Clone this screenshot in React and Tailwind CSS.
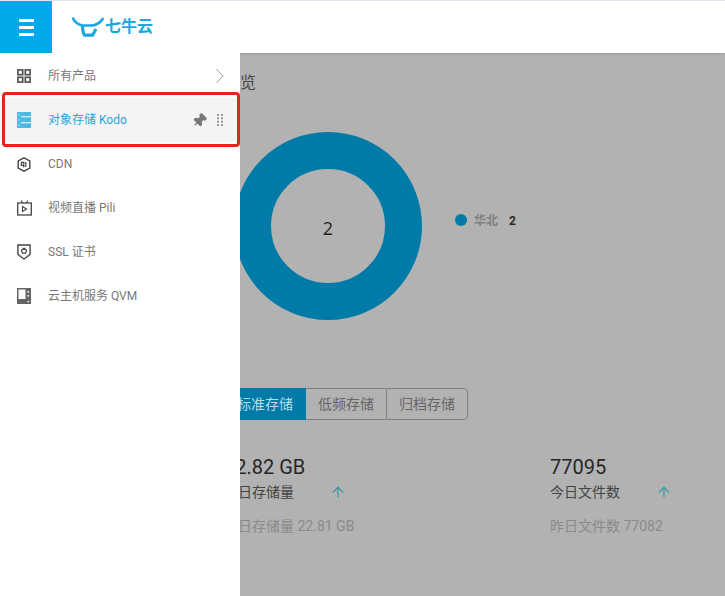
import { ChevronRight, Pin, ArrowUp } from "lucide-react";

const font = "font-['Roboto','Noto_Sans_CJK_SC',sans-serif]";

function GridIcon() {
  return (
    <svg width="14" height="14" viewBox="0 0 14 14" fill="none" stroke="#555" strokeWidth="1.7">
      <rect x="0.9" y="0.9" width="4.8" height="4.8" />
      <rect x="8.3" y="0.9" width="4.8" height="4.8" />
      <rect x="0.9" y="8.3" width="4.8" height="4.8" />
      <rect x="8.3" y="8.3" width="4.8" height="4.8" />
    </svg>
  );
}

function KodoIcon() {
  return (
    <svg width="14" height="16" viewBox="0 0 14 16">
      <rect width="14" height="16" fill="#4db9e2" />
      <path d="M4 4.8h10M4 10.8h10" stroke="#fff" strokeWidth="1.1" />
      <path d="M1.5 3h1.5M1.5 8h1.5M1.5 13h1.5" stroke="#d5f0fa" strokeWidth="1.2" />
    </svg>
  );
}

function CdnIcon() {
  return (
    <svg width="14" height="15" viewBox="0 0 14 15" fill="none" stroke="#444">
      <path d="M7 0.8l5.8 3.2v7L7 14.2 1.2 11V4z" strokeWidth="1.4" />
      <path d="M4.4 5.4h2.4v3H4.4zM6.8 8.4v2M8.8 5v5" strokeWidth="1.2" />
    </svg>
  );
}

function TvIcon() {
  return (
    <svg width="15" height="16" viewBox="0 0 15 16" fill="none" stroke="#444">
      <path d="M4 0.5l2 2.5M11 0.5L9 3" strokeWidth="1.1" />
      <rect x="0.7" y="3" width="13.6" height="12" strokeWidth="1.3" />
      <path d="M5.5 6.5l4 2.5-4 2.5z" strokeWidth="1.1" />
    </svg>
  );
}

function ShieldIcon() {
  return (
    <svg width="14" height="16" viewBox="0 0 14 16" fill="none" stroke="#444">
      <path d="M0.9 1h12.2v9.5L7 15 0.9 10.5z" strokeWidth="1.4" />
      <path d="M7 4.2l2.6 2-1 3H5.4l-1-3z" strokeWidth="1.2" />
    </svg>
  );
}

function QvmIcon() {
  return (
    <svg width="14" height="16" viewBox="0 0 14 16">
      <path d="M0 0h14v16H0zM1.5 1.5v9.5h7V1.5z" fill="#666" fillRule="evenodd" />
      <rect x="10.5" y="3" width="1.6" height="1.6" fill="#fff" />
      <rect x="10.5" y="7" width="1.6" height="1.6" fill="#fff" />
      <rect x="10.5" y="13" width="1.6" height="1.2" fill="#fff" />
    </svg>
  );
}

function GripIcon() {
  return (
    <svg width="6" height="12" viewBox="0 0 6 12" fill="#999">
      <rect x="0" y="0" width="2" height="2" />
      <rect x="4" y="0" width="2" height="2" />
      <rect x="0" y="3.3" width="2" height="2" />
      <rect x="4" y="3.3" width="2" height="2" />
      <rect x="0" y="6.7" width="2" height="2" />
      <rect x="4" y="6.7" width="2" height="2" />
      <rect x="0" y="10" width="2" height="2" />
      <rect x="4" y="10" width="2" height="2" />
    </svg>
  );
}

function Logo() {
  return (
    <svg width="32" height="20" viewBox="0 0 32 20" fill="none" stroke="#1ba8e0">
      <path d="M0.6 0.6C2.5 5 6 8 11 8.5h8c5 0 9.500-3 12.400-7.500" strokeWidth="2.600" />
      <path d="M10.500 8c0 5 .5 8 2 10.200h8L24 12" strokeWidth="3.200" />
    </svg>
  );
}

function MenuItem({ icon, label }) {
  return (
    <div className="flex h-11 items-center pl-[17px]">
      <div className="flex w-[31px] shrink-0">{icon}</div>
      <span className="text-xs text-[#777]">{label}</span>
    </div>
  );
}

function Stat({ value, label, prev, className }) {
  return (
    <div className={className}>
      <div className="text-[20px] leading-[22px] text-[#262626]">{value}</div>
      <div className="mt-1 flex items-center text-sm leading-5 text-[#444]">
        <span className="w-[106px] shrink-0">{label}</span>
        <ArrowUp size={16} className="text-[#3f9aa6]" />
      </div>
      <div className="mt-3.5 text-sm leading-5 text-[#8a8a8a]">{prev}</div>
    </div>
  );
}

export default function App() {
  return (
    <div className={`relative h-[596px] w-[725px] overflow-hidden bg-[#b2b2b2] ${font}`}>
      <header className="relative z-10 flex h-[53px] border-t border-[#dfe3f2] bg-white shadow-sm">
        <div className="flex w-[52px] flex-col items-center justify-center gap-1 bg-[#00a9e8]">
          <div className="h-[3px] w-[15px] bg-white" />
          <div className="h-[3px] w-[15px] bg-white" />
          <div className="h-[3px] w-[15px] bg-white" />
        </div>
        <div className="ml-5 flex items-center gap-px">
          <Logo />
          <span className="text-base font-bold tracking-[0px] text-[#1ba8e0]">七牛云</span>
        </div>
      </header>

      <main className="pl-[224px]">
        <h1 className="mt-[18px] text-base leading-6 text-[#444]">总览</h1>
        <div className="mt-[37px] flex items-center">
          <svg width="208" height="188" viewBox="0 0 208 188" className="shrink-0">
            <circle cx="104" cy="94" r="75.5" fill="none" stroke="#007ba7" strokeWidth="37" />
            <text x="104" y="103" textAnchor="middle" fontSize="18" fontFamily="Open Sans" fill="#222">2</text>
          </svg>
          <div className="-mt-3 ml-[23px] flex items-center">
            <div className="h-3 w-3 rounded-full bg-[#007ba7]" />
            <span className="ml-[7px] mt-0.5 text-xs font-bold text-[#808080]">华北</span>
            <span className="ml-[11px] mt-0.5 text-xs font-bold text-[#262626]">2</span>
          </div>
        </div>
        <div className="mt-[68px] flex h-[32px] w-[244px] text-sm">
          <div className="flex w-[82px] items-center justify-center bg-[#007ba7] text-[#b8dbe8]">标准存储</div>
          <div className="flex w-[80px] items-center justify-center border-y border-[#808080] text-[#666]">低频存储</div>
          <div className="flex w-[82px] items-center justify-center rounded-r-sm border border-[#808080] text-[#666]">归档存储</div>
        </div>
        <div className="mt-9 flex">
          <Stat value="22.82 GB" label="今日存储量" prev="昨日存储量 22.81 GB" className="w-[326px] shrink-0" />
          <Stat value="77095" label="今日文件数" prev="昨日文件数 77082" className="shrink-0" />
        </div>
      </main>

      <aside className="absolute bottom-0 left-0 top-[53px] z-20 w-[240px] bg-white pt-px">
        <div className="flex h-11 items-center pl-[17px] pr-[7px]">
          <div className="flex w-[31px] shrink-0"><GridIcon /></div>
          <span className="text-xs text-[#777]">所有产品</span>
          <ChevronRight size={26} strokeWidth={0.8} className="ml-auto text-[#888]" />
        </div>
        <div className="flex h-11 items-center rounded-sm bg-[#f4f4f4] pl-[17px] pr-[17px]">
          <div className="flex w-[31px] shrink-0"><KodoIcon /></div>
          <span className="text-xs text-[#1ea7d8]">对象存储 Kodo</span>
          <Pin size={15} fill="#777" className="ml-auto rotate-45 text-[#777]" />
          <div className="ml-[10px]"><GripIcon /></div>
        </div>
        <MenuItem icon={<CdnIcon />} label="CDN" />
        <MenuItem icon={<TvIcon />} label="视频直播 Pili" />
        <MenuItem icon={<ShieldIcon />} label="SSL 证书" />
        <MenuItem icon={<QvmIcon />} label="云主机服务 QVM" />
      </aside>

      {/* annotation drawn on top of the screenshot */}
      <div className="absolute left-0.5 top-[92px] z-30 h-[55px] w-[238px] rounded-sm border-[3px] border-[#e5231b]" />
    </div>
  );
}
